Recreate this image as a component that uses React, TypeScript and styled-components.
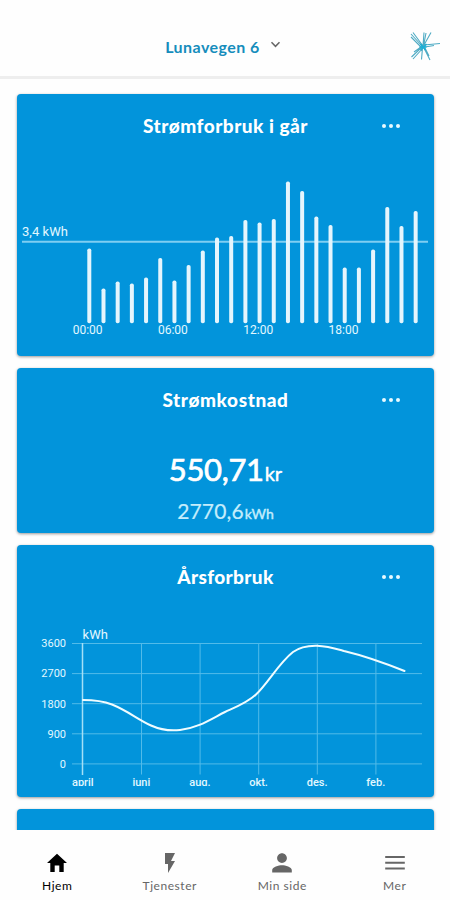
import React from "react";
import styled, { createGlobalStyle } from "styled-components";

const GlobalStyle = createGlobalStyle`
  * { box-sizing: border-box; }
  body { margin: 0; background: #fefefe; }
`;

const Screen = styled.div`
  display: flex;
  flex-direction: column;
  width: 450px;
  height: 900px;
  overflow: hidden;
  background: #fefefe;
  font-family: Lato, "Open Sans", sans-serif;
`;

const TopBar = styled.header`
  display: grid;
  grid-template-columns: 54px 1fr 54px;
  align-items: center;
  flex: none;
  height: 79px;
  padding-top: 15px;
  border-bottom: 3px solid #eeeeee;
`;

const AddressButton = styled.button`
  grid-column: 2;
  display: flex;
  align-items: center;
  justify-content: center;
  gap: 10px;
  padding: 2px 4px 0 0;
  border: 0;
  background: none;
  color: #168dbc;
  font: 700 16px/20px Lato, sans-serif;
  letter-spacing: 0.45px;
`;

const Chevron = styled.svg`
  margin-top: -3px;
`;

const Logo = styled.svg`
  width: 32px;
  height: 32px;
  margin: 1px 0 0 12px;
`;

const Feed = styled.main`
  display: flex;
  flex-direction: column;
  gap: 12px;
  flex: none;
  height: 751px;
  padding: 14.5px 16px 0 17px;
  overflow: hidden;
`;

const Card = styled.section<{ $height: number }>`
  flex: none;
  height: ${(p) => p.$height}px;
  border-radius: 4px;
  background: #0294db;
  color: #fff;
  box-shadow: 0 1px 3px rgba(0, 0, 0, 0.4);
`;

const CardHeader = styled.div`
  display: grid;
  grid-template-columns: 64px 1fr 64px;
  align-items: center;
  height: 64px;
`;

const CardTitle = styled.h2<{ $tracking: number }>`
  grid-column: 2;
  margin: 0;
  text-align: center;
  font-size: 19px;
  line-height: 24px;
  font-weight: 900;
  letter-spacing: ${(p) => p.$tracking}px;
`;

const MoreButton = styled.button`
  display: flex;
  gap: 3px;
  width: 20px;
  padding: 0;
  margin-left: 12px;
  border: 0;
  background: none;
`;

const Dot = styled.span`
  width: 4px;
  height: 4px;
  border-radius: 50%;
  background: #e8faff;
`;

const Chart = styled.svg`
  display: block;
  width: 417px;
  overflow: visible;
`;

const ChartText = styled.text`
  fill: #e2f8ff;
  font-family: Roboto, sans-serif;
`;

const Figures = styled.div`
  display: flex;
  flex-direction: column;
  align-items: center;
  padding-top: 17px;
`;

const Amount = styled.div<{ $small?: boolean }>`
  display: flex;
  align-items: baseline;
  font-size: ${(p) => (p.$small ? 21 : 31)}px;
  line-height: ${(p) => (p.$small ? 34 : 41)}px;
  letter-spacing: ${(p) => (p.$small ? 0.15 : -0.35)}px;
  font-weight: 400;
  color: ${(p) => (p.$small ? "#c5edfc" : "#fff")};
  -webkit-text-stroke: ${(p) => (p.$small ? 0.2 : 0.7)}px currentColor;
`;

const Unit = styled.span<{ $small?: boolean }>`
  margin-left: 1px;
  padding-top: 2px;
  font-size: ${(p) => (p.$small ? 14 : 20)}px;
  letter-spacing: 0;
  -webkit-text-stroke: 0.4px currentColor;
`;

const MonthRow = styled.div`
  display: grid;
  grid-template-columns: repeat(6, 58.6px);
  height: 10px;
  margin: -1px 0 0 36.5px;
  overflow: hidden;
  text-align: center;
  color: #e2f8ff;
  font: 500 11px/13px Roboto, sans-serif;
`;

const TabBar = styled.nav`
  display: grid;
  grid-template-columns: repeat(4, 112.5px);
  flex: 1;
  padding: 21px 0 0 1px;
`;

const Tab = styled.button<{ $active?: boolean }>`
  display: flex;
  flex-direction: column;
  align-items: center;
  gap: 3px;
  padding: 0;
  border: 0;
  background: none;
  color: ${(p) => (p.$active ? "#000" : "#666")};
  font: 400 12px/16px Lato, sans-serif;
  letter-spacing: 0.55px;
`;

const TabIcon = styled.svg`
  width: 24px;
  height: 24px;
  fill: currentColor;
`;

const barTops = [
  248, 288, 281, 283, 277, 257.5, 280, 264.5, 250, 237, 235.5, 219.5, 222,
  218.5, 181, 190.5, 216, 224.5, 267, 267, 249, 206.5, 225.5, 210.5,
];
const hours = ["00:00", "06:00", "12:00", "18:00"];
const months = ["april", "juni", "aug.", "okt.", "des.", "feb."];
const levels = ["3600", "2700", "1800", "900", "0"];

const tabs = [
  { label: "Hjem", path: "M9.700 21v-6.500h4.600V21h4.400v-9H22L12 2.700 2 12h3.300v9z" },
  { label: "Tjenester", path: "M7 2v11h3v9l7-12h-4l4-8z" },
  {
    label: "Min side",
    path: "M12 12c2.7 0 4.9-2.2 4.9-4.9S14.700 2.200 12 2.200 7.100 4.400 7.100 7.100 9.300 12 12 12zm0 2.200c-3.300 0-9.800 1.600-9.800 4.900V21.600h19.600v-2.500c0-3.300-6.500-4.900-9.800-4.900z",
  },
  { label: "Mer", path: "M2.200 5h19.600v2H2.200zM2.200 10.700h19.600v2H2.200zM2.200 16.400h19.600v2H2.200z" },
];

function Header({ title, tracking }: { title: string; tracking: number }) {
  return (
    <CardHeader>
      <CardTitle $tracking={tracking}>{title}</CardTitle>
      <MoreButton aria-label="Flere valg">
        <Dot />
        <Dot />
        <Dot />
      </MoreButton>
    </CardHeader>
  );
}

function DailyChart() {
  return (
    <Chart viewBox="17 157.500 417 190" height="190">
      <ChartText x="22" y="235.500" fontSize="13" textLength="46">3,4 kWh</ChartText>
      <path d="M22 241.300H428" stroke="#7fcef2" strokeWidth="2" />
      {barTops.map((top, i) => (
        <rect key={i} x={87.3 + i * 14.19} y={top} width="4" height={322.8 - top} rx="1.800" fill="#e4f5fd" />
      ))}
      {hours.map((hour, i) => (
        <ChartText key={hour} x={87.6 + i * 85.3} y="333.500" fontSize="12" textAnchor="middle">
          {hour}
        </ChartText>
      ))}
    </Chart>
  );
}

function YearChart() {
  return (
    <Chart viewBox="17 609 417 168" height="168">
      <ChartText x="82.500" y="639" fontSize="13" textLength="25.500">kWh</ChartText>
      <g stroke="#52bbe9" strokeWidth="1">
        {levels.map((level, i) => (
          <path key={level} d={`M72 ${643.5 + i * 30.1}H422`} />
        ))}
        {months.slice(1).map((month, i) => (
          <path key={month} d={`M${141.5 + i * 58.6} 643.500V774.500`} />
        ))}
      </g>
      <path d="M82.500 643V775" stroke="#a4e0f7" strokeWidth="1.500" />
      {levels.map((level, i) => (
        <ChartText key={level} x="66" y={647.3 + i * 30.1} fontSize="11" textAnchor="end">
          {level}
        </ChartText>
      ))}
      <path
        d="M83 700C91 700 103 701 112 704.500C128 711 137 719 151 725.500C161 730 171 731 180 730C198 728 211 719 225 712C236 707 247 703 256 694.500C268 683 279 663 293 652C301 646 309 645.500 317 645.700C328 646 337 649 344 651C365 656 382 662 404.500 671"
        fill="none"
        stroke="#f0fcff"
        strokeWidth="2"
        strokeLinecap="round"
      />
    </Chart>
  );
}

export default function App() {
  return (
    <Screen>
      <GlobalStyle />
      <TopBar>
        <AddressButton>
          Lunavegen 6
          <Chevron width="11" height="8" viewBox="0 0 12 9" fill="none" stroke="#666" strokeWidth="1.700">
            <path d="M1.500 1.500L6 6L10.500 1.500" />
          </Chevron>
        </AddressButton>
        <Logo viewBox="408 30 32 32" fill="none" stroke="#4fabc4" strokeWidth="1.100">
          <path d="M411 34L422 46M413 32.500L423 46M411 37L421 47M424 32.500L423 46M426 33L423.500 46M431 32.500L424 45M424 45L440 43.500M425 47L434 45.500M422 47L411.500 57M421 47L414 52M423 48L413 59M422.500 48L421.500 59.500M424 48L430 60M425 48L429 56" />
          <path d="M420.500 44l5 6m1-6-6 6m-1-3h7" stroke="#1baed4" strokeWidth="1.500" />
        </Logo>
      </TopBar>
      <Feed>
        <Card $height={262}>
          <Header title="Strømforbruk i går" tracking={0.5} />
          <DailyChart />
        </Card>
        <Card $height={165.5}>
          <Header title="Strømkostnad" tracking={0.6} />
          <Figures>
            <Amount>550,71<Unit>kr</Unit></Amount>
            <Amount $small>2770,6<Unit $small>kWh</Unit></Amount>
          </Figures>
        </Card>
        <Card $height={252}>
          <Header title="Årsforbruk" tracking={0.35} />
          <YearChart />
          <MonthRow>
            {months.map((month) => <span key={month}>{month}</span>)}
          </MonthRow>
        </Card>
        <Card $height={60} />
      </Feed>
      <TabBar>
        {tabs.map((tab, i) => (
          <Tab key={tab.label} $active={i === 0}>
            <TabIcon viewBox="0 0 24 24"><path d={tab.path} /></TabIcon>
            {tab.label}
          </Tab>
        ))}
      </TabBar>
    </Screen>
  );
}
